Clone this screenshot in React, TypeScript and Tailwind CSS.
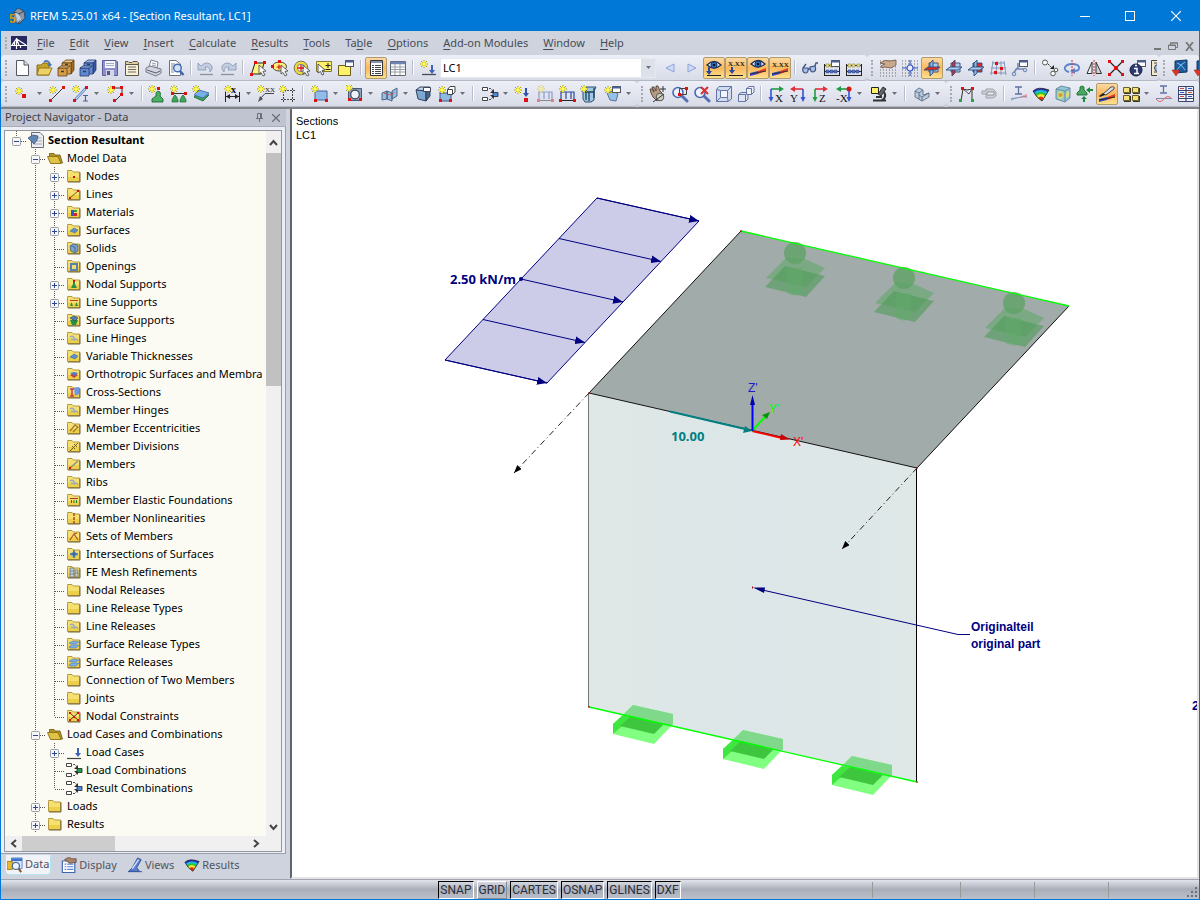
import type { ReactNode } from 'react';

import clsx from 'clsx';

interface IPoint {
  x: number;
  y: number;
}

const Star = ({ x, y }: IPoint) => (
  <g transform={`translate(${x} ${y})`}>
    <path d="M0-4V4M-4 0H4M-3-3 3 3M-3 3 3-3" stroke="#a89a12" strokeWidth="1" />
    <path d="M0-3 1-1 3 0 1 1 0 3-1 1-3 0-1-1Z" fill="#fffb6a" stroke="#f7ee3a" strokeWidth="1" />
  </g>
);

const Node = ({ x, y }: IPoint) => <rect x={x} y={y} width="3" height="3" fill="#dd1111" />;

const Cone = ({ x, y }: IPoint) => (
  <g transform={`translate(${x} ${y})`}>
    <path d="M-1-2Q0-4 1-2L3 2V4H-3V2Z" fill="#3fa65a" stroke="#1d6a30" strokeWidth="0.7" />
  </g>
);

const Eye = ({ y = 5 }: { y?: number }) => (
  <g transform={`translate(9 ${y})`}>
    <path d="M-7 0Q0-7 7 0Q0 6-7 0Z" fill="#eef4fb" stroke="#1d2c50" strokeWidth="1.3" />
    <circle r="3.1" fill="#2f6fc4" stroke="#163565" />
    <circle r="1.3" fill="#08132c" />
  </g>
);

const Dots = () => (
  <path
    d="M1 2H17M1 5H17M1 8H17M1 11H17M1 14H17M1 17H17"
    stroke="#666"
    strokeWidth="1"
    strokeDasharray="1 2"
  />
);

const Magnifier = () => (
  <>
    <path d="M11 11 16 16" stroke="#5470b4" strokeWidth="3" strokeLinecap="round" />
    <circle cx="7" cy="7.5" r="5" fill="#eaf2fd" stroke="#4a68b0" strokeWidth="1.6" />
  </>
);

const Cursor = () => <path d="M10 6 17 12 14 12.5 16 16 14 17 12 13.5 10 15Z" fill="#f5f5f5" stroke="#555" strokeWidth="0.9" />;

const Popup = () => (
  <>
    <rect x="8.5" y="1.5" width="8" height="6" fill="#fff" stroke="#555" />
    <path d="M8 2.5H17" stroke="#4a5f96" strokeWidth="2" />
  </>
);

const Ramp = () => (
  <>
    <path d="M1 17V14L9 12V15Z" fill="#2d49d2" />
    <path d="M9 15V12L17 9V12Z" fill="#e3402e" />
    <path d="M1 15 17 12" stroke="#333" />
  </>
);

interface IDrawer {
  top: string;
  side: string;
  front: string;
  edge: string;
}

const Drawer = ({ top, side, front, edge }: IDrawer) => (
  <g stroke={edge} strokeWidth="0.8">
    <path d="M5 4 9 1H17L14 4Z" fill={top} />
    <path d="M14 4 17 1V11L14 15Z" fill={side} />
    <path d="M5 4H14V15H5Z" fill={front} />
    <path d="M2 9 5 7V14L2 16Z" fill={side} />
    <path d="M1 9H10V17H1Z" fill={front} />
    <path d="M1 9 4 7H13L10 9Z" fill={top} />
    <path d="M8 5.500H11M4 12.500H7" stroke="#3a3d46" strokeWidth="1.600" />
  </g>
);

const LoadFrame = ({ faded }: { faded?: boolean }) => (
  <g opacity={faded ? 0.45 : 1}>
    <path d="M3 15V7H8V14M8 7H13V14M13 7H16V15" stroke="#2c4a9c" strokeWidth="1.2" />
    <path d="M1 15.5H17" stroke="#222" />
    <Star x={5} y={4} />
    <Node x={1} y={14} />
    <Node x={15} y={14} />
  </g>
);

interface IAxisView {
  label: string;
  across: string;
  down: string;
  flip?: boolean;
  corner?: string;
}

const AxisView = ({ label, across, down, flip, corner }: IAxisView) => (
  <>
    <g transform={flip ? 'translate(18 0) scale(-1 1)' : undefined}>
      <path d="M4 4H13" stroke={across} strokeWidth="1.600" />
      <path d="M12 1 17 4 12 7Z" fill={across} />
      <path d="M4 4V13" stroke={down} strokeWidth="1.600" />
      <path d="M1.500 12H6.500L4 17Z" fill={down} />
      {corner && <circle cx="4" cy="4" r="2.500" fill={corner} />}
    </g>
    <text x={flip ? 1 : 8} y="17" fontSize="11" fontFamily="Liberation Serif, serif" fill="#111">
      {label}
    </text>
  </>
);

const WorkPlane = ({ mode }: { mode: 1 | 2 | 3 }) => (
  <g strokeWidth="0.900">
    <path d="M6 4H15V13H6Z" fill={mode === 3 ? '#e02b22' : '#a9cdf0'} stroke="#2c4c80" />
    <path d="M7 4 10 1V14L7 17Z" fill={mode === 2 ? '#e02b22' : '#8ab8e6'} stroke="#2c4c80" />
    <path d="M1 11 5 8H17L13 11Z" fill={mode === 1 ? '#e02b22' : '#a9cdf0'} stroke="#2c4c80" />
  </g>
);

const Rainbow = () => (
  <>
    <path d="M1 6Q6 1 17 5L10 16Q4 12 1 6Z" fill="#2430b8" />
    <path d="M2 7.500Q8 3 16 7L10 16Q4 12 2 7.500Z" fill="#17bfe0" />
    <path d="M3 9Q9 5 14.500 9L10 16Q5 13 3 9Z" fill="#31c337" />
    <path d="M4.500 11Q9 7 13 11L10 16Q6 14 4.500 11Z" fill="#f7e52c" />
    <path d="M6 13Q9 10 11.500 13L10 16Z" fill="#ea2f1c" />
    <path d="M1 6Q6 1 17 5L10 16Q4 12 1 6Z" stroke="#222" strokeWidth="0.8" />
  </>
);

const Combination = ({ fill }: { fill: string }) => (
  <>
    <path d="M1.500 2.500H6.500V5.500H1.500ZM1.500 12.500H6.500V15.500H1.500Z" fill="#fff" stroke="#444" />
    <path d="M8 3.500H10L12 6M8 14.500H10L12 12" stroke="#555" strokeDasharray="2 1" />
    <path d="M13 4V8H9ZM13 14V10H9Z" fill="#333" />
    <path d="M12 7.500H17V11.500H12Z" fill={fill} stroke="#223" strokeWidth="0.800" />
  </>
);

const Prism = () => (
  <g strokeWidth="0.900">
    <path d="M2 5 6 2H16L12 6Z" fill="#bcd6ee" stroke="#27364f" />
    <path d="M2 5 12 6V16L4 14Z" fill="#7ba7d1" stroke="#27364f" />
    <path d="M12 6 16 2V11L12 16Z" fill="#41678f" stroke="#27364f" />
  </g>
);

const IBeam = ({ x, y }: IPoint) => (
  <path transform={`translate(${x} ${y})`} d="M0 0H7M3.500 0V7M0 7H7" stroke="#6272a6" strokeWidth="1.3" />
);

const Beads = () => (
  <>
    <path d="M1.500 5V17M16.500 5V17M1 16.500H17" stroke="#222" />
    <path d="M2 6.500H16M2 12.500H16" stroke="#333" />
    <path d="M3 5H6V8H3ZM7 5H10V8H7ZM12 5H15V8H12Z" fill="#f0e28a" stroke="#77703a" strokeWidth="0.500" />
    <path d="M3 11H6V14H3ZM7 11H10V14H7ZM11 11H14V14H11Z" fill="#5573c4" stroke="#2c4283" strokeWidth="0.500" />
  </>
);

const ICONS: Record<string, ReactNode> = {
  new: (
    <>
      <path d="M3.500 1.500H11L15.500 6V16.500H3.500Z" fill="#fdfdff" stroke="#55585f" />
      <path d="M11 1.500V6H15.500" fill="#d7dbe6" stroke="#55585f" />
    </>
  ),
  open: (
    <>
      <path d="M2 6H6L8 4H14V16H2Z" fill="#c8a428" stroke="#7d6412" strokeWidth="0.900" />
      <path d="M4 9H17L14 16H2Z" fill="#ecd266" stroke="#8a7018" strokeWidth="0.900" />
      <path d="M9 3Q13 0 15 5" stroke="#4976b8" strokeWidth="1.800" />
      <path d="M12 5H17L15 8Z" fill="#4976b8" />
    </>
  ),
  archive: <Drawer top="#f0c47c" side="#a36c22" front="#d99d45" edge="#59421c" />,
  blocks: <Drawer top="#9cb8ee" side="#3a58a2" front="#6188d2" edge="#24386a" />,
  save: (
    <>
      <path d="M1.500 1.500H15L16.500 3V16.500H1.500Z" fill="#8d91cb" stroke="#5a5d98" />
      <path d="M4 2H14V9H4Z" fill="#f5f6fb" />
      <path d="M5 4.500H13M5 6.500H13" stroke="#a8aac9" />
      <path d="M5 11H13V17H5Z" fill="#d4d6e6" />
      <path d="M6 12H9V16H6Z" fill="#54588c" />
    </>
  ),
  notes: (
    <>
      <path d="M2.500 5.500H15.500V16.500H2.500Z" fill="#f6efd8" stroke="#5f5745" />
      <path d="M2.500 5.500V2.500H5L6 3.500H9L10 2.500H14L15.500 4V5.500Z" fill="#ded0a4" stroke="#5f5745" />
      <path d="M5 8H13M5 10.500H13M5 13H13" stroke="#736c58" />
    </>
  ),
  print: (
    <>
      <path d="M4 8 6 1 13 3 12 9Z" fill="#fff" stroke="#7d808d" />
      <path d="M1 9 5 7 16 10V14L11 17 1 13Z" fill="#d3d6e2" stroke="#6b6e7e" strokeWidth="0.900" />
      <path d="M2 11 11 14 15 12" stroke="#5a5d6e" />
      <path d="M7 4 11 5M7 6 11 7" stroke="#9699a8" />
    </>
  ),
  preview: (
    <>
      <path d="M2.500 1.500H9L13.500 5V16.500H2.500Z" fill="#fff" stroke="#70727a" />
      <path d="M4 5H8M4 7H10M4 9H7M4 11H6M4 13H7" stroke="#85878f" />
      <circle cx="10.500" cy="9" r="3.800" fill="#cfe1f5" stroke="#456bb3" strokeWidth="1.400" />
      <path d="M13 12 16.500 16" stroke="#3f62ae" strokeWidth="2.400" />
    </>
  ),
  undo: (
    <>
      <path d="M4 7Q10 1 15 7Q16 10 13 13Q13 7 8 8L9 11H1V4Z" fill="#c3cde0" stroke="#8696b5" strokeWidth="0.800" />
      <path d="M3 15.500H16" stroke="#8b919e" strokeWidth="1.300" />
    </>
  ),
  redo: (
    <>
      <path d="M14 7Q8 1 3 7Q2 10 5 13Q5 7 10 8L9 11H17V4Z" fill="#c3cde0" stroke="#8696b5" strokeWidth="0.800" />
      <path d="M2 15.500H15" stroke="#8b919e" strokeWidth="1.300" />
    </>
  ),
  selectPlane: (
    <>
      <path d="M2.500 15 6 4H15L12 15Z" fill="#fdf37c" stroke="#222" />
      <Cursor />
      <Node x={1} y={14} />
      <Node x={5} y={2} />
      <Node x={14} y={2} />
    </>
  ),
  selectEllipse: (
    <>
      <ellipse cx="8.500" cy="7.500" rx="7" ry="4.500" fill="#fdf37c" stroke="#444" />
      <Cursor />
      <path d="M8 5.500V10.500M5.500 8H10.500" stroke="#dd1111" strokeWidth="1.200" />
      <Node x={7} y={1} />
      <Node x={0} y={6} />
    </>
  ),
  selectCircle: (
    <>
      <circle cx="8" cy="9" r="6.800" fill="#fff" stroke="#555" />
      <circle cx="8" cy="9" r="5.300" stroke="#f0d92a" strokeWidth="2.200" />
      <circle cx="8" cy="9" r="3.700" stroke="#555" strokeWidth="0.800" />
      <Cursor />
      <path d="M8 6V12M5 9H11" stroke="#dd1111" strokeWidth="1.300" />
    </>
  ),
  selectAdd: (
    <>
      <path d="M1.500 2.500H16.500V12.500H1.500Z" fill="#fdf06a" stroke="#857b2c" />
      <path d="M3 5 10 11 7 11.500 9 15 7 16 5.500 12.500 3 14Z" fill="#fff" stroke="#444" strokeWidth="0.900" />
      <path d="M13 4V9M10.500 6.500H15.500M10.500 10.500H15.500" stroke="#222" />
    </>
  ),
  selectWindow: (
    <>
      <path d="M1.500 6.500H13.500V16.500H1.500Z" fill="#fdf06a" stroke="#6a6019" />
      <Popup />
    </>
  ),
  navigator: (
    <>
      <path d="M3.500 1.500H15.500V16.500H3.500Z" fill="#fff" stroke="#333" />
      <path d="M4 3H15" stroke="#8a93ad" strokeWidth="2" />
      <path d="M8 6.500H14M8 8.500H14M8 10.500H14M8 12.500H14M8 14.500H14" stroke="#444" />
      <path d="M5 6.500H7M5 8.500H7M5 10.500H7M5 12.500H7M5 14.500H7" stroke="#444" />
    </>
  ),
  table: (
    <>
      <path d="M1.500 2.500H16.500V16.500H1.500Z" fill="#fff" stroke="#666974" />
      <path d="M2 4H16" stroke="#6d84b4" strokeWidth="2.500" />
      <path d="M2 8H16M2 10.500H16M2 13H16M6 5V16M11 5V16" stroke="#989ba4" />
    </>
  ),
  loadCase: (
    <>
      <Star x={5} y={5} />
      <path d="M13 6V12" stroke="#3e62b5" strokeWidth="2" />
      <path d="M10 11H16L13 15Z" fill="#3e62b5" />
      <path d="M3 15.500H17" stroke="#4a4c55" strokeWidth="1.300" />
    </>
  ),
  prev: <path d="M13 5V13L5 9Z" fill="#d0daf5" stroke="#8ea3dc" />,
  next: <path d="M5 5V13L13 9Z" fill="#d0daf5" stroke="#8ea3dc" />,
  showLoads: (
    <>
      <Eye y={6} />
      <path d="M4 8V14" stroke="#2548a5" strokeWidth="2" />
      <path d="M1 12H7L4 16Z" fill="#2548a5" />
      <path d="M2 16.500H16" stroke="#222" />
    </>
  ),
  loadValues: (
    <>
      <text x="1" y="7" fontSize="7" fontWeight="700" fontFamily="Liberation Serif, serif" fill="#222">
        X.XX
      </text>
      <path d="M5 8V13" stroke="#2548a5" strokeWidth="2" />
      <path d="M2 11H8L5 15Z" fill="#2548a5" />
      <path d="M2 16.500H16" stroke="#222" />
    </>
  ),
  showResults: (
    <>
      <Ramp />
      <Eye />
    </>
  ),
  resultValues: (
    <>
      <Ramp />
      <text x="1" y="8" fontSize="7" fontWeight="700" fontFamily="Liberation Serif, serif" fill="#222">
        X.XX
      </text>
    </>
  ),
  glasses: (
    <>
      <path d="M2 9Q1 13 4 14Q8 14 7 9ZM9 8Q9 13 12 13Q16 12 14 7Z" fill="#a9bfe6" stroke="#3f5482" strokeWidth="1.200" />
      <path d="M7 10H9M2 9 5 5M14 7 15 4H17" stroke="#3f5482" strokeWidth="1.300" />
    </>
  ),
  calcDialog: (
    <>
      <Beads />
      <Popup />
    </>
  ),
  calc: <Beads />,
  gridHand: (
    <>
      <Dots />
      <path d="M1 4Q6 0 11 2L17 1V6L12 9 6 8 3 9 2 7 6 5Z" fill="#cba98e" stroke="#6d5241" strokeWidth="0.800" />
    </>
  ),
  snapGrid: (
    <>
      <Dots />
      <path d="M9 1V17M1 9H17" stroke="#3a58c0" strokeWidth="1.200" />
      <circle cx="9" cy="9" r="3" fill="#e9eefb" stroke="#3a58c0" strokeWidth="1.200" />
    </>
  ),
  planeXY: <WorkPlane mode={1} />,
  planeYZ: <WorkPlane mode={2} />,
  planeXZ: <WorkPlane mode={3} />,
  guideGrid: (
    <>
      <path d="M4 2 2 16M8 2 7 16M12 2 12 16M15 2 17 16M3 4H16M2 9H17M1 14H17" stroke="#8190b5" strokeWidth="0.900" />
      <Node x={6} y={3} />
      <Node x={11} y={8} />
      <Node x={5} y={12} />
    </>
  ),
  objectSnap: (
    <>
      <path d="M6 9 2 15M6 10H14M7 4V10" stroke="#7186b4" strokeWidth="1.600" />
      <circle cx="3" cy="15" r="1.800" fill="#c6d2ea" stroke="#7186b4" />
      <circle cx="14" cy="11" r="1.800" fill="#c6d2ea" stroke="#7186b4" />
      <Popup />
    </>
  ),
  copyMove: (
    <>
      <circle cx="4" cy="3.500" r="2.500" fill="#fff" stroke="#555" />
      <circle cx="12" cy="14.500" r="2.300" fill="#fff" stroke="#555" />
      <circle cx="15" cy="11" r="1.800" fill="#fff" stroke="#555" />
      <path d="M7 5 12 10" stroke="#333" strokeDasharray="2 1" />
      <path d="M13 6V10H9Z" fill="#222" />
    </>
  ),
  rotate: (
    <>
      <path d="M6 13Q1 12 2 8Q4 5 9 5Q15 5 16 8Q17 12 11 12" stroke="#5b82c8" strokeWidth="1.800" />
      <path d="M12 9V15L7 12Z" fill="#5b82c8" />
      <path d="M9 1V17" stroke="#d03030" strokeDasharray="2 1" />
    </>
  ),
  mirror: (
    <>
      <path d="M7 3V14.500H2Z" fill="#eee" stroke="#333" />
      <path d="M11 3V14.500H16.500Z" fill="#cdd2de" stroke="#333" />
      <path d="M9 1V17" stroke="#d03030" strokeDasharray="2 1" />
    </>
  ),
  divide: (
    <>
      <path d="M2 2 16 16M16 2 2 16" stroke="#222" strokeWidth="1.200" />
      <path d="M1 1H4V4H1ZM14 1H17V4H14ZM7 7H11V11H7ZM1 14H4V17H1ZM14 14H17V17H14Z" fill="#dd1111" />
    </>
  ),
  info: (
    <>
      <Popup />
      <circle cx="7" cy="11" r="6" fill="#2c3a72" stroke="#161f48" />
      <path d="M5 9.500H8V14M5 14.500H10M6 6.500H8" stroke="#fff" strokeWidth="1.500" />
    </>
  ),
  panel: (
    <>
      <path d="M1.500 1.500H16V16.500H1.500Z" fill="#f2ead0" stroke="#444" />
      <path d="M4 4H14M4 13H14" stroke="#444" />
      <circle cx="8" cy="9" r="3.500" fill="#97b7e8" stroke="#444" />
    </>
  ),
  module: (
    <>
      <path d="M4 2 16 1V13L4 14Z" fill="#1d5b9c" stroke="#143863" />
      <path d="M6 4 10 6 14 3M6 11 10 6 14 11" stroke="#7ec4f2" />
      <path d="M1 11H9L5 17Z" fill="#e0342a" stroke="#961d17" strokeWidth="0.500" />
    </>
  ),
  node: (
    <>
      <Star x={6} y={6} />
      <rect x="9" y="9" width="4" height="4" fill="#dd1111" />
    </>
  ),
  line: (
    <>
      <path d="M3 15 15 3" stroke="#333" />
      <Star x={5} y={5} />
      <Node x={1} y={14} />
      <Node x={14} y={1} />
    </>
  ),
  member: (
    <>
      <path d="M3 15 14 3" stroke="#6d92c9" strokeWidth="2.600" />
      <path d="M3 15 14 3" stroke="#cfe2f7" />
      <Star x={4} y={4} />
      <Node x={1} y={14} />
      <Node x={13} y={1} />
      <path d="M11 10.500H16M13.500 10.500V16M11 16H16" stroke="#4c60a2" strokeWidth="1.200" />
    </>
  ),
  polyline: (
    <>
      <path d="M6 3H15V9L8 16" stroke="#333" />
      <Star x={4} y={5} />
      <Node x={5} y={1} />
      <Node x={13} y={1} />
      <Node x={13} y={8} />
      <Node x={6} y={14} />
    </>
  ),
  nodalSupport: (
    <>
      <path d="M8 8Q9 5 12 7Q13 10 12 11L15 14V17H4V14L8 11Z" fill="#4bb066" stroke="#1c6a31" strokeWidth="0.900" />
      <Star x={4} y={4} />
      <Node x={9} y={2} />
    </>
  ),
  lineSupport: (
    <>
      <path d="M4 8.500H15" stroke="#333" />
      <Star x={4} y={4} />
      <Node x={1} y={7} />
      <Node x={14} y={7} />
      <Cone x={5} y={13} />
      <Cone x={13} y={13} />
    </>
  ),
  surfaceSupport: (
    <>
      <path d="M2 12 7 8 17 10 11 16Z" fill="#3ba556" stroke="#1c6a31" strokeWidth="0.900" />
      <path d="M2 10 7 5 17 8 11 13Z" fill="#76b0ea" stroke="#3f6ba8" strokeWidth="0.900" />
      <Star x={4} y={4} />
    </>
  ),
  dimension: (
    <>
      <path d="M1.500 7V17M15.500 7V17M2 11.500H15" stroke="#222" />
      <path d="M2 11.500 6 9V14ZM15 11.500 11 9V14Z" fill="#222" />
      <Star x={4} y={4} />
      <text x="7" y="8" fontSize="10" fontWeight="700" fontFamily="Liberation Serif, serif" fill="#111">
        x
      </text>
    </>
  ),
  comment: (
    <>
      <path d="M3 14 8 8.500H17" stroke="#444" />
      <path d="M1 17 3 11 6 14Z" fill="#555" />
      <Star x={4} y={4} />
      <text x="8" y="7" fontSize="7" fontFamily="Liberation Serif, serif" fill="#222">
        XX
      </text>
    </>
  ),
  guideline: (
    <>
      <path d="M4.500 3V17M13.500 3V17M2 5.500H17M2 14.500H17" stroke="#444" strokeDasharray="2 1" />
      <Star x={4} y={4} />
    </>
  ),
  surface: (
    <>
      <path d="M4 6H16V15H4Z" fill="#93bce8" stroke="#42659a" />
      <Star x={4} y={4} />
      <Node x={3} y={14} />
      <Node x={14} y={14} />
    </>
  ),
  opening: (
    <>
      <path d="M2.500 3.500H15.500V15.500H2.500Z" fill="#8ba0bd" stroke="#4a5a75" />
      <circle cx="9" cy="9.500" r="4.300" fill="#f0f2f7" stroke="#3b465a" strokeWidth="1.200" />
      <Node x={2} y={13} />
      <Node x={13} y={13} />
      <Star x={3} y={3} />
    </>
  ),
  intersection: (
    <g strokeWidth="0.900">
      <path d="M1 8 6 6V14L1 15ZM6 6 11 8V16L6 14ZM11 6 16 3V11L11 14Z" fill="#9cbcdd" stroke="#3f5c84" />
      <path d="M3 8 9 10 14 7" stroke="#d4302a" strokeDasharray="2 1" />
    </g>
  ),
  solid: (
    <>
      <Prism />
      <path d="M9.500 2.500H16.500V6.500H9.500Z" fill="#fff" stroke="#445" />
    </>
  ),
  extrude: (
    <>
      <path d="M2 8H13V16H2Z" fill="#8fb8e2" stroke="#3d5c88" />
      <path d="M9.500 4.500H14.500V9.500H9.500ZM9.500 4.500 12 1.500H17V7L14.500 9.500" fill="#fff" stroke="#444" />
      <Star x={4} y={5} />
      <Node x={1} y={14} />
      <Node x={11} y={14} />
    </>
  ),
  combination: <Combination fill="#4d8be0" />,
  nodalLoad: (
    <>
      <Star x={4} y={5} />
      <path d="M12 3V9" stroke="#2d53ab" strokeWidth="2" />
      <path d="M9 8H15L12 12Z" fill="#2d53ab" />
      <rect x="10" y="13" width="4" height="4" fill="#dd1111" />
    </>
  ),
  lineLoad: <LoadFrame faded />,
  memberLoad: <LoadFrame />,
  surfaceLoad: (
    <>
      <path d="M3 6 6 2H16L14 6V15L11 17H5L3 14Z" fill="#9fc9e6" stroke="#2c4d6b" />
      <path d="M6 4V15M9 7V16M14 3V13M5 7H14" stroke="#223f5c" strokeWidth="1.300" />
      <Star x={4} y={4} />
    </>
  ),
  generateLoad: (
    <>
      <path d="M3 8 9 6 14 9 12 16 6 15Z" fill="#95c1e8" stroke="#54779f" />
      <Popup />
      <Star x={4} y={5} />
    </>
  ),
  pan: (
    <>
      <path d="M2 8 1 4 3 4 5 7 3 2H5L7 6 7 1H9L11 6 13 8 11 14 8 16 4 12Z" fill="#b59a86" stroke="#4c4038" strokeWidth="0.900" />
      <circle cx="11" cy="12" r="3.800" fill="#cfcfbd" stroke="#555" />
      <path d="M14 1V7M11 4H17M4 17 15 9" stroke="#333" />
    </>
  ),
  zoomWindow: (
    <>
      <Magnifier />
      <path d="M8.500 3.500H15.500V9.500H8.500Z" stroke="#444" />
      <Node x={14} y={2} />
      <Node x={7} y={8} />
    </>
  ),
  zoomOut: (
    <>
      <Magnifier />
      <path d="M8 2 15 9M15 2 8 9" stroke="#df2c2c" strokeWidth="2" />
    </>
  ),
  perspective: (
    <>
      <path d="M1.500 4.500 4 1.500H16.500V14L13 16.500H1.500Z" fill="#d3dbee" stroke="#6275a6" />
      <path d="M5.500 5.500H12.500V12.500H5.500Z" fill="#f2f5fb" stroke="#6275a6" />
      <path d="M1.500 4.500 5.500 5.500M12.500 5.500 16.500 1.500M12.500 12.500 13 16M5.500 12.500 1.500 16.500" stroke="#6275a6" />
    </>
  ),
  isometric: (
    <>
      <path d="M1.500 9.500H8.500V16.500H1.500ZM1.500 9.500 4 7.500H11V14L8.500 16.500" fill="#dfe5f3" stroke="#6275a6" />
      <path d="M9.500 3.500H14.500V9.500H9.500ZM9.500 3.500 12 1.500H17V7L14.500 9.500" fill="#eef1f9" stroke="#6275a6" />
    </>
  ),
  viewX: <AxisView label="X" across="#1f9d45" down="#3454d8" />,
  viewY: <AxisView label="Y" across="#e0303c" down="#3454d8" flip />,
  viewZ: <AxisView label="Z" across="#e0303c" down="#1f9d45" />,
  viewMinusX: <AxisView label="-X" across="#1f9d45" down="#3454d8" flip corner="#cc1a1a" />,
  workshop: (
    <>
      <path d="M1.500 2.500H8.500V8.500H1.500Z" fill="#fdf36a" stroke="#222" />
      <path d="M13 2 16 4 11 11 8 9Z" fill="#5e646c" stroke="#222" strokeWidth="0.900" />
      <path d="M14 7Q17 12 12 15M3 15.500H16M6 12H12" stroke="#333" strokeWidth="2" />
    </>
  ),
  render: (
    <g stroke="#5d7088" strokeWidth="0.900">
      <path d="M2 6 6 3 10 5V10L16 8V12L9 16 2 12Z" fill="#bccbdc" />
      <path d="M2 6 6 8V14M6 8 10 5M9 16V12L16 8M6 10 9 12" />
    </g>
  ),
  frame: (
    <>
      <path d="M3 16 5 4 9 5 14 4 14 15" stroke="#333" />
      <path d="M5 4 11 9 14 4" stroke="#333" strokeWidth="0.800" />
      <Node x={3} y={2} />
      <Node x={13} y={2} />
      <path d="M1 14H4V17H1ZM13 14H16V17H13Z" fill="#30a048" />
    </>
  ),
  scale: (
    <>
      <path d="M2 6H6V4H13L16 7V11L13 13H6V9H2Z" fill="#cfd1d6" stroke="#a0a3ab" />
      <path d="M7 7H14V10H7Z" fill="#edeef1" stroke="#8d919b" />
    </>
  ),
  memberResult: (
    <>
      <IBeam x={5} y={2} />
      <path d="M1 16V13L9 12Z" fill="#a9b6e8" />
      <path d="M17 9V13L9 12Z" fill="#e8a2a6" />
      <path d="M1 14 17 11" stroke="#8a90b0" />
    </>
  ),
  surfaceResult: <Rainbow />,
  solidResult: (
    <g strokeWidth="0.900">
      <path d="M2 4 7 1 16 3V13L11 17 2 14Z" fill="#8fc7d8" stroke="#6c8296" />
      <path d="M2 4 11 6V17M11 6 16 3" stroke="#6c8296" />
      <ellipse cx="6.500" cy="10" rx="3" ry="4" fill="#bfe37a" />
      <circle cx="6.500" cy="10" r="2" fill="#f08a4a" />
      <path d="M12 8 15 6V11L12 13Z" fill="#d6df7a" />
    </g>
  ),
  reactions: (
    <>
      <path d="M4 2Q6 0 8 2V5L11 8V10H1V8L4 5Z" fill="#46a95f" stroke="#1c6a31" strokeWidth="0.900" />
      <path d="M8 17V14M17 5H14" stroke="#20883a" strokeWidth="2" />
      <path d="M5 14H11L8 11ZM14 2V8L10 5Z" fill="#20883a" />
    </>
  ),
  section: (
    <>
      <path d="M5 9 13 2Q17 1 16 4L8 10Z" fill="#d7dde9" stroke="#333" strokeWidth="0.900" />
      <path d="M1 11 5 8 7 10 2 12Z" fill="#222" />
      <path d="M1 17V14L9 12V15Z" fill="#2d4bd2" />
      <path d="M9 15V12L17 9V12Z" fill="#e83a24" />
      <path d="M1 15 17 12" stroke="#222" />
    </>
  ),
  windows: (
    <>
      <path d="M1.500 2.500H7.500V7.500H1.500ZM10.500 2.500H16.500V7.500H10.500ZM1.500 10.500H7.500V15.500H1.500ZM10.500 10.500H16.500V15.500H10.500Z" fill="#f7e27c" stroke="#6a6026" />
      <path d="M2 8.500H8.500V3M11 8.500H17.500V3M2 16.500H8.500V11M11 16.500H17.500V11" stroke="#3a3720" />
    </>
  ),
  diagram: (
    <>
      <IBeam x={5} y={1} />
      <path d="M1 13.500H17" stroke="#7f88ac" />
      <path d="M1 14Q5 19 9 14Q13 9 17 14" stroke="#e06a6a" />
    </>
  ),
  resultTable: (
    <>
      <path d="M1.500 1.500H16.500V16.500H1.500Z" fill="#f1f4fa" stroke="#3a4570" />
      <path d="M9 1V17M1 5.500H17M1 9.500H17M1 13.500H17" stroke="#3a4570" strokeWidth="1.200" />
      <path d="M3 3.500H7M3 11.500H7M11 7.500H15" stroke="#d3473d" />
      <path d="M11 3.500H15M3 7.500H7M11 11.500H15" stroke="#3154c4" />
    </>
  )
};

interface ITool {
  id: string;
  on?: boolean;
  menu?: boolean;
}

const SEP = { id: 'sep' };

const FILE_TOOLS: ITool[] = [
  ...['new', 'open', 'archive', 'blocks', 'save', 'notes', 'print', 'preview'].map((id) => ({ id })),
  SEP,
  { id: 'undo' },
  { id: 'redo' },
  SEP,
  ...['selectPlane', 'selectEllipse', 'selectCircle', 'selectAdd', 'selectWindow'].map((id) => ({ id })),
  SEP,
  { id: 'navigator', on: true },
  { id: 'table' },
  SEP,
  { id: 'loadCase' }
];

const RESULT_TOOLS: ITool[] = [
  { id: 'prev' },
  { id: 'next' },
  { id: 'showLoads', on: true },
  { id: 'loadValues', on: true },
  { id: 'showResults', on: true },
  { id: 'resultValues', on: true },
  SEP,
  { id: 'glasses' },
  { id: 'calcDialog' },
  { id: 'calc' }
];

const PLANE_TOOLS: ITool[] = [
  { id: 'gridHand' },
  { id: 'snapGrid' },
  { id: 'planeXY', on: true },
  { id: 'planeYZ' },
  { id: 'planeXZ' },
  { id: 'guideGrid' },
  { id: 'objectSnap' },
  SEP,
  ...['copyMove', 'rotate', 'mirror', 'divide', 'info'].map((id) => ({ id }))
];

const INSERT_TOOLS: ITool[] = [
  { id: 'node', menu: true },
  { id: 'line' },
  { id: 'member', menu: true },
  { id: 'polyline', menu: true },
  SEP,
  { id: 'nodalSupport' },
  { id: 'lineSupport' },
  { id: 'surfaceSupport' },
  SEP,
  { id: 'dimension', menu: true },
  { id: 'comment' },
  { id: 'guideline' },
  SEP,
  { id: 'surface', menu: true },
  { id: 'opening', menu: true },
  { id: 'intersection', menu: true },
  { id: 'solid' },
  { id: 'extrude', menu: true },
  SEP,
  { id: 'combination', menu: true },
  { id: 'nodalLoad' },
  { id: 'lineLoad' },
  { id: 'memberLoad' },
  { id: 'surfaceLoad' },
  { id: 'generateLoad', menu: true }
];

const VIEW_TOOLS: ITool[] = [
  ...['pan', 'zoomWindow', 'zoomOut', 'perspective', 'isometric'].map((id) => ({ id })),
  SEP,
  { id: 'viewX' },
  { id: 'viewY' },
  { id: 'viewZ' },
  { id: 'viewMinusX', menu: true },
  { id: 'workshop', menu: true },
  SEP,
  { id: 'render', menu: true }
];

const DISPLAY_TOOLS: ITool[] = [
  { id: 'frame' },
  { id: 'scale' },
  SEP,
  { id: 'memberResult' },
  { id: 'surfaceResult' },
  { id: 'solidResult' },
  { id: 'reactions' },
  { id: 'section', on: true },
  { id: 'windows', menu: true },
  { id: 'diagram' },
  { id: 'resultTable' }
];

const Icon = ({ id }: { id: string }) => (
  <svg width="18" height="18" viewBox="0 0 18 18" fill="none" className="shrink-0" aria-hidden="true">
    {ICONS[id]}
  </svg>
);

const Tools = ({ items }: { items: ITool[] }) => (
  <>
    {items.map(({ id, on, menu }, i) => {
      if (id === 'sep') {
        return (
          <span key={i} className="flex w-2 shrink-0 justify-center">
            <span className="h-[15px] w-[2px] border-r border-white bg-[#b9bdc9]" />
          </span>
        );
      }
      return (
        <span key={i} className="flex shrink-0 items-center">
          <button
            type="button"
            aria-label={id}
            className={clsx(
              'flex h-[22px] w-[22px] items-center justify-center',
              on && 'rounded-xs border border-[#b19a6c] bg-linear-to-b from-[#fcd9a2] via-[#fbb75c] to-[#fde08d]',
              menu && id !== 'node' && 'pl-1'
            )}
          >
            <Icon id={id} />
          </button>
          {menu && (
            <button type="button" aria-label={`${id} menu`} className="flex h-[22px] w-[13px] items-center justify-center">
              <svg width="5" height="3" viewBox="0 0 5 3" aria-hidden="true">
                <path d="M0 0H5L2.500 3Z" fill="#6d7079" />
              </svg>
            </button>
          )}
        </span>
      );
    })}
  </>
);

const Bar = ({ children, grow }: { children: ReactNode; grow?: boolean }) => (
  <div
    className={clsx(
      'flex h-[26px] items-center rounded-sm border-b border-[#b4b8c5] bg-linear-to-b from-[#edeff7] to-[#d8dce7] pr-[2px]',
      grow ? 'min-w-0 flex-1 overflow-hidden' : 'shrink-0'
    )}
  >
    <span className="flex w-[10px] shrink-0 justify-center">
      <span className="h-4 border-l-2 border-dotted border-[#a5a9b6]" />
    </span>
    {children}
  </div>
);

const MENU = ['File', 'Edit', 'View', 'Insert', 'Calculate', 'Results', 'Tools', 'Table', 'Options', 'Add-on Modules', 'Window', 'Help'];

const TitleBar = () => (
  <header className="flex h-[30px] shrink-0 items-center bg-[#0078d7] text-white">
    <svg width="18" height="18" viewBox="0 0 18 18" fill="none" className="ml-[7px]" aria-hidden="true">
      <path d="M6 5 10 1 16 4 17 11 11 17 5 14Z" fill="#8798ad" stroke="#3c4a5c" />
      <path d="M6 5 11 7 16 4M11 7 11 17" stroke="#35424f" />
      <path d="M7 6Q11 5 13 12L10 15Z" fill="#c3cedb" />
      <text x="1" y="16" fontSize="12" fontWeight="700" fontFamily="Liberation Sans, sans-serif" fill="#f3b31c" stroke="#5c4204" strokeWidth="0.300">
        5
      </text>
    </svg>
    <h1 className="ml-1 flex-1 text-[11px]">RFEM 5.25.01 x64 - [Section Resultant, LC1]</h1>
    <button type="button" aria-label="Minimize" className="flex h-full w-[45px] items-center justify-center">
      <span className="h-px w-[10px] bg-white" />
    </button>
    <button type="button" aria-label="Maximize" className="flex h-full w-[45px] items-center justify-center">
      <span className="h-[10px] w-[10px] border border-white" />
    </button>
    <button type="button" aria-label="Close" className="flex h-full w-[47px] items-center justify-center">
      <svg width="10" height="10" viewBox="0 0 10 10" aria-hidden="true">
        <path d="M0 0 10 10M10 0 0 10" stroke="#fff" strokeWidth="1.200" />
      </svg>
    </button>
  </header>
);

const MenuBar = () => (
  <nav className="flex h-6 shrink-0 items-center bg-[#cfd3dd] text-[11px] text-[#484b57]">
    <span className="ml-1 h-3 border-l-2 border-dotted border-[#a5a9b6]" />
    <svg width="16" height="14" viewBox="0 0 16 14" fill="none" className="mr-[10px] ml-1" aria-hidden="true">
      <rect width="16" height="14" fill="#27285f" />
      <path d="M0 9.500H16M5.500 2V13M1 9 5.500 3 8 9M5.500 3 15 9M9.500 9V12M3.500 6V9" stroke="#fff" strokeWidth="1.200" />
    </svg>
    <div className="flex flex-1 gap-[15px]">
      {MENU.map((label) => {
        const at = label === 'Table' ? 2 : 0;
        return (
          <button key={label} type="button">
            {label.slice(0, at)}
            <span className="underline underline-offset-2">{label[at]}</span>
            {label.slice(at + 1)}
          </button>
        );
      })}
    </div>
    <div className="mr-1 flex items-center gap-1 self-end pb-[3px]">
      <button type="button" aria-label="Minimize document" className="flex h-3 w-3 items-end justify-center pb-[2px]">
        <span className="h-[2px] w-[7px] bg-[#777]" />
      </button>
      <button type="button" aria-label="Restore document" className="flex h-3 w-3 items-center justify-center">
        <svg width="10" height="8" viewBox="0 0 10 8" fill="none" aria-hidden="true">
          <path d="M2.500 3V1H9.500V5.500H8M.5 3H7.500V7.500H.5Z" stroke="#777" />
          <path d="M2 1H10M0 3.500H8" stroke="#777" />
        </svg>
      </button>
      <button type="button" aria-label="Close document" className="flex h-3 w-3 items-center justify-center">
        <svg width="9" height="9" viewBox="0 0 9 9" aria-hidden="true">
          <path d="M1 0 8 9M8 0 1 9" stroke="#777" strokeWidth="1.800" />
        </svg>
      </button>
    </div>
  </nav>
);

const Toolbars = () => (
  <div className="shrink-0 border-b-2 border-[#808287] bg-[#cfd3dd]">
    <div className="flex overflow-hidden">
      <Bar>
        <Tools items={FILE_TOOLS} />
        <div className="mr-[3px] ml-px flex h-5 w-[216px] border border-[#e6e9f0] bg-white">
          <label htmlFor="load-case" className="sr-only">
            Load case
          </label>
          <select id="load-case" className="min-w-0 flex-1 appearance-none bg-white px-[2px] text-[11px] leading-[18px] text-black outline-none">
            <option>LC1</option>
          </select>
          <span className="flex w-[14px] items-center justify-center bg-[#dde1ea]">
            <svg width="5" height="3" viewBox="0 0 5 3" aria-hidden="true">
              <path d="M0 0H5L2.500 3Z" fill="#6d7079" />
            </svg>
          </span>
        </div>
        <Tools items={RESULT_TOOLS} />
      </Bar>
      <Bar>
        <Tools items={PLANE_TOOLS} />
        <button type="button" aria-label="panel" className="w-2 overflow-hidden pl-px">
          <Icon id="panel" />
        </button>
      </Bar>
      <Bar grow>
        <Tools items={[{ id: 'module' }, { id: 'module' }]} />
      </Bar>
    </div>
    <div className="flex overflow-hidden">
      <Bar>
        <Tools items={INSERT_TOOLS} />
      </Bar>
      <Bar>
        <Tools items={VIEW_TOOLS} />
      </Bar>
      <Bar grow>
        <Tools items={DISPLAY_TOOLS} />
      </Bar>
    </div>
  </div>
);

// Small drawings placed on the closed folder, in its 16x16 box
const BADGES: Record<string, ReactNode> = {
  node: <rect x="7" y="8" width="2" height="2" fill="#d01010" />,
  line: (
    <>
      <path d="M4 12 12 5" stroke="#7a5a2a" />
      <path d="M3 11H5V13H3ZM11 4H13V6H11Z" fill="#d01010" />
    </>
  ),
  material: (
    <>
      <path d="M5 6H8V12H5Z" fill="#3557c8" />
      <path d="M8 9H11V12H8Z" fill="#d8222a" />
      <path d="M8 6H11V8H8Z" fill="#2fa44a" />
    </>
  ),
  surface: <path d="M4 9 8 6 12 8 9 11Z" fill="#5b8fd0" stroke="#39608f" strokeWidth="0.500" />,
  solid: (
    <>
      <path d="M4 6 7 4 12 5V11L9 13 5 11Z" fill="#7ba4d4" stroke="#3d5a82" strokeWidth="0.800" />
      <path d="M5 6 9 7V12" stroke="#3d5a82" strokeWidth="0.800" />
    </>
  ),
  opening: <path d="M5 6H11V12H5Z" fill="#f3dc72" stroke="#5b7fae" strokeWidth="2" />,
  support: (
    <>
      <path d="M7 6H9V8L11 12H5L7 8Z" fill="#2b8f45" />
      <rect x="7" y="4" width="2" height="2" fill="#d01010" />
    </>
  ),
  lineSupport: (
    <>
      <path d="M4 6.500H12" stroke="#c23a2a" />
      <path d="M4 12 5.500 8 7 12ZM9 12 10.500 8 12 12Z" fill="#2b8f45" />
    </>
  ),
  surfaceSupport: (
    <>
      <path d="M4 8 12 8 10 13H6Z" fill="#2b8f45" />
      <path d="M4 6 8 4 12 6 9 9Z" fill="#4f7fbd" stroke="#1d4250" strokeWidth="0.600" />
    </>
  ),
  hinge: <path d="M4 7Q7 5 9 9L12 10M5 9 9 10" stroke="#9aa9bb" strokeWidth="1.500" />,
  ortho: (
    <>
      <path d="M4 9 8 7 12 9 8 12Z" fill="#d0393f" />
      <path d="M4 7 8 6 12 7 9 10Z" fill="#4b7ec7" />
    </>
  ),
  cross: (
    <>
      <path d="M8 4 13 3V10L9 12Z" fill="#6f97e6" />
      <path d="M4 5H8M6 5V12M4 12H8" stroke="#c43b55" strokeWidth="1.500" />
    </>
  ),
  eccentric: <path d="M4 11 9 5 12 7 7 12" stroke="#a3742a" strokeWidth="1.200" />,
  division: <path d="M4 13 12 5M6 8 9 11M8 6 11 9" stroke="#6a5a2d" />,
  member: (
    <>
      <path d="M4 12 12 5" stroke="#8a8f94" strokeWidth="1.500" />
      <path d="M3 11H5V13H3Z" fill="#d01010" />
    </>
  ),
  foundation: (
    <>
      <path d="M4 6.500H12" stroke="#a33" />
      <path d="M5.500 8V11M8 8V11M10.500 8V11" stroke="#1c7a34" />
    </>
  ),
  nonlinear: <path d="M8 3V14" stroke="#b04a30" strokeWidth="1.500" strokeDasharray="3 1" />,
  set: <path d="M4 12 8 6 12 12M8 6 11 5" stroke="#b0502e" strokeWidth="1.200" />,
  intersect: (
    <>
      <path d="M4 8 8 5 12 8 8 12Z" fill="#6ba3dd" />
      <path d="M8 4V12M4 8H12" stroke="#2c4c78" />
    </>
  ),
  mesh: (
    <>
      <path d="M4 4H8V13H4ZM9 6H12V13H9Z" fill="#c3ceda" stroke="#5a6880" strokeWidth="0.700" />
      <path d="M4 7H8M4 10H8M9 9H12" stroke="#5a6880" strokeWidth="0.700" />
    </>
  ),
  release: <path d="M3 7 7 5 13 6 10 8H4ZM3 11 6 9H13L10 12H4Z" fill="#7db0e6" stroke="#4a79b4" strokeWidth="0.600" />,
  constraint: (
    <>
      <path d="M4 5 12 12M12 5 4 12" stroke="#5a3a1a" />
      <path d="M3 4H5V6H3ZM11 4H13V6H11ZM3 11H5V13H3ZM11 11H13V13H11ZM7 8H9V10H7Z" fill="#d01010" />
    </>
  )
};

const TreeIcon = ({ id }: { id: string }) => {
  if (id === 'load') {
    return (
      <svg width="18" height="16" viewBox="0 0 18 16" fill="none" aria-hidden="true">
        <path d="M13 4V10" stroke="#3e62b5" strokeWidth="2" />
        <path d="M10 9H16L13 13Z" fill="#3e62b5" />
        <path d="M2 14.500H16" stroke="#444" strokeWidth="1.200" />
      </svg>
    );
  }
  if (id === 'lc' || id === 'rc') {
    return (
      <svg width="18" height="16" viewBox="0 1 18 16" fill="none" aria-hidden="true">
        <Combination fill={id === 'lc' ? '#12a83c' : '#4d8be0'} />
      </svg>
    );
  }
  if (id === 'model') {
    return (
      <svg width="16" height="16" viewBox="0 0 16 16" fill="none" aria-hidden="true">
        <path d="M3.500.5H12L15.500 4V15.500H3.500Z" fill="#eceef2" stroke="#6a6e78" />
        <path d="M5 6H13M5 9H14M5 12H14" stroke="#a3a6af" />
        <path d="M0 6 5 3 10 4 9 8 6 12 4 10Z" fill="#6286b4" stroke="#3d5677" strokeWidth="0.800" />
      </svg>
    );
  }
  if (id === 'open') {
    return (
      <svg width="16" height="16" viewBox="0 0 16 16" fill="none" aria-hidden="true">
        <path d="M2.500 6V3.500H7L8 5H13L15.500 13H4Z" fill="#b39423" stroke="#7b6519" strokeWidth="0.900" />
        <path d="M.5 6.500H11L14 13.500H3.500Z" fill="#e0c244" stroke="#8a7018" strokeWidth="0.900" />
      </svg>
    );
  }
  return (
    <svg width="16" height="16" viewBox="0 0 16 16" fill="none" aria-hidden="true">
      <path d="M1.500 3.500V2.500H6L7.500 4H13.500V13.500H1.500Z" fill="#f5e070" stroke="#b39a40" />
      <path d="M2 9H13V13H2Z" fill="#ecd04a" />
      <path d="M14 4.500V14H2" stroke="#75653a" />
      {BADGES[id]}
    </svg>
  );
};

interface ITreeRow {
  depth: number;
  label: string;
  icon: string;
  box?: '+' | '-';
  last?: boolean;
}

const TREE: ITreeRow[] = [
  { depth: 0, label: 'Section Resultant', icon: 'model', box: '-', last: true },
  { depth: 1, label: 'Model Data', icon: 'open', box: '-' },
  { depth: 2, label: 'Nodes', icon: 'node', box: '+' },
  { depth: 2, label: 'Lines', icon: 'line', box: '+' },
  { depth: 2, label: 'Materials', icon: 'material', box: '+' },
  { depth: 2, label: 'Surfaces', icon: 'surface', box: '+' },
  { depth: 2, label: 'Solids', icon: 'solid' },
  { depth: 2, label: 'Openings', icon: 'opening' },
  { depth: 2, label: 'Nodal Supports', icon: 'support', box: '+' },
  { depth: 2, label: 'Line Supports', icon: 'lineSupport', box: '+' },
  { depth: 2, label: 'Surface Supports', icon: 'surfaceSupport' },
  { depth: 2, label: 'Line Hinges', icon: 'hinge' },
  { depth: 2, label: 'Variable Thicknesses', icon: 'surface' },
  { depth: 2, label: 'Orthotropic Surfaces and Membra', icon: 'ortho' },
  { depth: 2, label: 'Cross-Sections', icon: 'cross' },
  { depth: 2, label: 'Member Hinges', icon: 'hinge' },
  { depth: 2, label: 'Member Eccentricities', icon: 'eccentric' },
  { depth: 2, label: 'Member Divisions', icon: 'division' },
  { depth: 2, label: 'Members', icon: 'member' },
  { depth: 2, label: 'Ribs', icon: 'hinge' },
  { depth: 2, label: 'Member Elastic Foundations', icon: 'foundation' },
  { depth: 2, label: 'Member Nonlinearities', icon: 'nonlinear' },
  { depth: 2, label: 'Sets of Members', icon: 'set' },
  { depth: 2, label: 'Intersections of Surfaces', icon: 'intersect' },
  { depth: 2, label: 'FE Mesh Refinements', icon: 'mesh' },
  { depth: 2, label: 'Nodal Releases', icon: 'folder' },
  { depth: 2, label: 'Line Release Types', icon: 'folder' },
  { depth: 2, label: 'Line Releases', icon: 'hinge' },
  { depth: 2, label: 'Surface Release Types', icon: 'release' },
  { depth: 2, label: 'Surface Releases', icon: 'release' },
  { depth: 2, label: 'Connection of Two Members', icon: 'folder' },
  { depth: 2, label: 'Joints', icon: 'folder' },
  { depth: 2, label: 'Nodal Constraints', icon: 'constraint', last: true },
  { depth: 1, label: 'Load Cases and Combinations', icon: 'open', box: '-' },
  { depth: 2, label: 'Load Cases', icon: 'load', box: '+' },
  { depth: 2, label: 'Load Combinations', icon: 'lc' },
  { depth: 2, label: 'Result Combinations', icon: 'rc', last: true },
  { depth: 1, label: 'Loads', icon: 'folder', box: '+' },
  { depth: 1, label: 'Results', icon: 'folder', box: '+' }
];

const Branch = ({ row }: { row: ITreeRow }) => (
  <svg width="19" height="18" viewBox="0 0 19 18" fill="none" aria-hidden="true">
    <path d={row.last ? 'M9.500 0V10' : 'M9.500 0V18'} stroke="#555" strokeDasharray="1 1" />
    <path d="M10 10.500H19" stroke="#555" strokeDasharray="1 1" />
    {row.box && (
      <>
        <rect x="5.500" y="6.500" width="8" height="8" rx="1" fill="#f6f6f6" stroke="#9a9da5" />
        <path d={row.box === '+' ? 'M7 10.500H12M9.500 8V13' : 'M7 10.500H12'} stroke="#2a4696" />
      </>
    )}
  </svg>
);

const TreeRow = ({ row }: { row: ITreeRow }) => (
  <li role="treeitem" className="flex h-[18px] items-center whitespace-nowrap">
    {row.depth > 0 && <span className="w-[19px] shrink-0" />}
    {row.depth > 1 && (
      <svg width="19" height="18" viewBox="0 0 19 18" className="shrink-0" aria-hidden="true">
        <path d="M9.500 0V18" stroke="#555" strokeDasharray="1 1" />
      </svg>
    )}
    {row.box ? (
      <button type="button" aria-label={`Toggle ${row.label}`} className="shrink-0">
        <Branch row={row} />
      </button>
    ) : (
      <span className="shrink-0">
        <Branch row={row} />
      </span>
    )}
    <span className="mr-[2px] flex w-5 shrink-0 justify-center">
      <TreeIcon id={row.icon} />
    </span>
    <span className={clsx(row.depth === 0 && 'font-bold')}>{row.label}</span>
  </li>
);

const Chevron = ({ d }: { d: string }) => (
  <svg width="9" height="9" viewBox="0 0 9 9" fill="none" aria-hidden="true">
    <path d={d} stroke="#444" strokeWidth="2" />
  </svg>
);

const TabIcon = ({ id }: { id: string }) => (
  <svg width="16" height="16" viewBox="0 0 18 18" fill="none" aria-hidden="true">
    {id === 'Data' && (
      <>
        <path d="M5 1H17V13H5Z" fill="#d6e6fa" stroke="#5b88d0" />
        <path d="M5 3H17" stroke="#3f70c8" strokeWidth="3" />
        <path d="M0 5H6V14H0Z" fill="#e9bb29" stroke="#a07c1a" />
        <circle cx="10" cy="10" r="4" fill="#eef5ff" stroke="#4d6c9f" strokeWidth="1.500" />
        <path d="M13 13 16 17" stroke="#86522a" strokeWidth="2.200" />
      </>
    )}
    {id === 'Display' && (
      <>
        <path d="M1.500 4.500H15.500V17.500H1.500Z" fill="#fff" stroke="#3f66b0" strokeWidth="1.300" />
        <path d="M4 8H6M7 8H14M4 11H6M7 11H14M4 14H6M7 14H14" stroke="#5a84d0" strokeWidth="1.300" />
        <path d="M4 3Q9-1 12 2H17V6L10 7Z" fill="#aa8467" stroke="#5c483a" strokeWidth="0.900" />
      </>
    )}
    {id === 'Views' && (
      <>
        <path d="M1 16.500H17M12 1 16 3 11 12 14 16H2L6 12Z" fill="#5b80d2" stroke="#30509c" />
        <path d="M6 13 13 3" stroke="#d8e3fa" strokeWidth="1.500" />
      </>
    )}
    {id === 'Results' && <Rainbow />}
  </svg>
);

const Navigator = () => (
  <aside className="flex w-[285px] shrink-0 flex-col">
    <div className="flex h-[18px] shrink-0 items-center border-b border-[#a9adbb] bg-[#c0c4d1] pr-[6px] pl-1 text-[11px] text-[#3e4049]">
      <h2 className="flex-1">Project Navigator - Data</h2>
      <button type="button" aria-label="Pin" className="mr-2">
        <svg width="9" height="9" viewBox="0 0 9 9" fill="none" aria-hidden="true">
          <path d="M2.500 5V.5H6.500V5M5.500 1V5M1 5.500H8M4.500 6V9" stroke="#6d6f78" />
        </svg>
      </button>
      <button type="button" aria-label="Close navigator">
        <svg width="8" height="8" viewBox="0 0 8 8" aria-hidden="true">
          <path d="M0 0 8 8M8 0 0 8" stroke="#6d6f78" strokeWidth="1.300" />
        </svg>
      </button>
    </div>
    <div className="flex min-h-0 flex-1 flex-col border-r border-b border-[#9a9ea9] bg-[#eceef5] px-[3px] pt-[3px] pb-px">
      <div className="flex min-h-0 flex-1 flex-col border border-[#9296a1] bg-[#f0f0f0]">
        <div className="flex min-h-0 flex-1">
          <ul role="tree" className="min-w-0 flex-1 overflow-hidden bg-[#fbfbf3] pl-[2px] text-[11px] text-black">
            {TREE.map((row) => (
              <TreeRow key={row.label + row.depth} row={row} />
            ))}
          </ul>
          <div className="flex w-[15px] shrink-0 flex-col">
            <button type="button" aria-label="Scroll up" className="flex h-[22px] items-center justify-center">
              <Chevron d="M1 7 4.500 3 8 7" />
            </button>
            <div className="h-[33%] bg-[#c1c1c1]" />
            <div className="flex-1" />
            <button type="button" aria-label="Scroll down" className="flex h-[18px] items-center justify-center">
              <Chevron d="M1 2 4.500 6 8 2" />
            </button>
          </div>
        </div>
        <div className="mr-4 flex h-[15px] shrink-0 items-center">
          <button type="button" aria-label="Scroll left" className="flex h-full w-[17px] items-center justify-center">
            <Chevron d="M7 1 3 4.500 7 8" />
          </button>
          <div className="h-full w-[93px] bg-[#cdcdcd]" />
          <div className="flex-1" />
          <button type="button" aria-label="Scroll right" className="flex h-full w-[18px] items-center justify-center">
            <Chevron d="M2 1 6 4.500 2 8" />
          </button>
        </div>
      </div>
    </div>
    <div role="tablist" className="flex h-[25px] shrink-0 items-start gap-[10px] pt-px pl-1 text-[11px] text-[#51545f]">
      {['Data', 'Display', 'Views', 'Results'].map((tab) => (
        <button
          key={tab}
          type="button"
          role="tab"
          aria-selected={tab === 'Data'}
          className={clsx(
            'flex h-5 items-center gap-[2px]',
            tab === 'Data' && 'rounded-b-sm border border-t-0 border-[#b7e3ea] bg-[#f1f3f8] px-px'
          )}
        >
          <TabIcon id={tab} />
          {tab}
        </button>
      ))}
    </div>
  </aside>
);

const LOAD_STEPS = [0, 1, 2, 3, 4];

const Viewport = () => (
  <main className="ml-1 min-w-0 flex-1 overflow-hidden border-r-2 border-b-2 border-l-2 border-r-[#e3e3e3] border-b-[#e3e3e3] border-l-[#62646a] bg-white">
    <svg viewBox="292 109 905 768" preserveAspectRatio="xMinYMin meet" fill="none" className="h-full w-full" role="img" aria-label="Model view">
      <defs>
        <marker id="load-head" viewBox="0 0 10 8" refX="10" refY="4" markerWidth="10" markerHeight="8" markerUnits="userSpaceOnUse" orient="auto">
          <path d="M0 0 10 4 0 8Z" fill="#000080" />
        </marker>
        <marker id="dir-head" viewBox="0 0 8 6" refX="8" refY="3" markerWidth="8" markerHeight="6" markerUnits="userSpaceOnUse" orient="auto">
          <path d="M0 0 8 3 0 6Z" fill="#000" />
        </marker>
        <linearGradient id="wall" x1="0" x2="1">
          <stop offset="0" stopColor="#dfe8e6" />
          <stop offset="0.5" stopColor="#dde6e8" />
          <stop offset="1" stopColor="#dfe8e7" />
        </linearGradient>
        <g id="roof-support">
          <path d="M766 278 787 257 805 259 825 268 806 287Z" fill="#62a96b" fillOpacity="0.6" />
          <path d="M785 266 825 276 806 297 765 287Z" fill="#4f9d59" fillOpacity="0.6" />
          <path d="M787 268V293Q795 298 802 293V268Z" fill="#62a96b" fillOpacity="0.5" />
          <circle cx="795" cy="253" r="11" fill="#5fa366" fillOpacity="0.8" />
        </g>
        <g id="base-support">
          <path d="M633 705 673 714V724L654 744 613 734V724Z" fill="#80ff80" />
          <path d="M633 705 673 714V724L671 726 623 715Z" fill="#80d98b" />
          <path d="M613 724 623 715 632 717 621 727 613 734Z" fill="#3fe63f" />
          <path d="M631 716 664 724 654 734 620 726Z" fill="#3fc63f" />
        </g>
      </defs>

      <g fontFamily="Liberation Sans, sans-serif" fontSize="11" fill="#000">
        <text x="296" y="125">Sections</text>
        <text x="296" y="139">LC1</text>
      </g>

      <path d="M597 198 699 221 547 383 445 360Z" fill="#cccce8" stroke="#000080" />
      {LOAD_STEPS.map((i) => (
        <line
          key={i}
          x1={597 - 38 * i}
          y1={198 + 40.5 * i}
          x2={699 - 38 * i}
          y2={221 + 40.5 * i}
          stroke="#000080"
          markerEnd="url(#load-head)"
        />
      ))}
      <circle cx="521" cy="279" r="2" fill="#000080" />

      <path d="M589 393 917 468V782L589 707Z" fill="url(#wall)" />
      <path d="M741 231 1069 306 917 468 589 393Z" fill="#a1aba9" />
      <use href="#roof-support" />
      <use href="#roof-support" x="109" y="25" />
      <use href="#roof-support" x="219" y="50" />
      <path d="M741 231 589 393 917 468 1069 306" stroke="#111" />
      <path d="M588.500 393V707" stroke="#777" />
      <path d="M916.500 468V782" stroke="#000" />
      <path d="M741 231 1069 306" stroke="#00ff00" strokeWidth="1.300" />

      <use href="#base-support" />
      <use href="#base-support" x="110" y="25" />
      <use href="#base-support" x="219" y="51" />
      <path d="M589 707 917 782" stroke="#00ff00" strokeWidth="1.300" />

      <path d="M589 393 514 473" stroke="#222" strokeDasharray="6 3 1 3" markerEnd="url(#dir-head)" />
      <path d="M917 468 842 549" stroke="#222" strokeDasharray="6 3 1 3" markerEnd="url(#dir-head)" />

      <path d="M670 411.500 745 429" stroke="#008080" strokeWidth="2" />
      <path d="M752 431 743 433 745 426Z" fill="#008080" />
      <path d="M752 431 782 438" stroke="#f00" strokeWidth="2" />
      <path d="M790 439.500 780 440 781 434Z" fill="#c00" />
      <path d="M752 431 765 417" stroke="#0f0" strokeWidth="2" />
      <path d="M770 412 767 419 762 415Z" fill="#0a930a" />
      <path d="M752.500 431V404" stroke="#00f" strokeWidth="2" />
      <path d="M752.500 395 755 405H750Z" fill="#0000b0" />
      <g fontFamily="Liberation Sans, sans-serif" fontSize="12">
        <text x="748" y="392" fill="#1a1ad0">Z&apos;</text>
        <text x="769" y="413" fill="#0f0">Y&apos;</text>
        <text x="793" y="446" fill="#f00">X&apos;</text>
      </g>

      <path d="M758 589 958 634.500H970" stroke="#000080" />
      <path d="M753 587.500 765 587.500 764 593Z" fill="#000080" />
      <path d="M740.500 231h1M588.500 393h1M916.500 468h1M588.500 707h1M752 587.500h1M916.500 782h1" stroke="#a00" strokeWidth="2" />

      <g fontWeight="700" fontFamily="Noto Sans, sans-serif">
        <text x="516" y="284" fontSize="13" textAnchor="end" fill="#000080">
          2.50 kN/m
        </text>
        <text x="671" y="441" fontSize="13" fill="#008080">
          10.00
        </text>
      </g>
      <g fontWeight="700" fontFamily="Liberation Sans, sans-serif" fontSize="12" fill="#000080">
        <text x="971" y="631">Originalteil</text>
        <text x="971" y="648">original part</text>
        <text x="1192" y="710" fontSize="13">2</text>
      </g>
    </svg>
  </main>
);

const MODES = ['SNAP', 'GRID', 'CARTES', 'OSNAP', 'GLINES', 'DXF'];

const StatusBar = () => (
  <footer className="flex h-5 shrink-0 items-center border-t border-[#a0a4b2] bg-linear-to-b from-[#e2e4ec] via-[#a9aeb9] to-[#bbc0ca]">
    <div className="flex flex-1 justify-center gap-[3px] pl-[246px] text-[12px] text-[#2b2e39]">
      {MODES.map((mode) => (
        <button
          key={mode}
          type="button"
          className={clsx(
            "h-[18px] border px-px font-['Roboto','Liberation_Sans',sans-serif] leading-4",
            mode === 'GRID' ? 'border-t-white border-r-[#8b8e97] border-b-[#8b8e97] border-l-white' : 'border-t-black border-r-white border-b-white border-l-black'
          )}
        >
          {mode}
        </button>
      ))}
    </div>
    <div className="flex h-full items-center">
      <span className="h-4 w-[88px] border-l border-[#999]" />
      <span className="h-4 w-[74px] border-l border-[#999]" />
      <span className="h-4 w-[74px] border-l border-[#999]" />
      <span className="h-4 w-[79px] border-l border-[#999]" />
      <svg width="12" height="12" viewBox="0 0 12 12" className="self-end" aria-hidden="true">
        <path d="M8 0h2v2h-2zM4 4h2v2h-2zM8 4h2v2h-2zM0 8h2v2h-2zM4 8h2v2h-2zM8 8h2v2h-2z" fill="#6b6f7b" />
      </svg>
    </div>
  </footer>
);

const App = () => (
  <div className="flex h-screen flex-col overflow-hidden border border-[#0078d7] bg-[#cfd3dd] font-['Noto_Sans','Open_Sans',sans-serif]">
    <TitleBar />
    <MenuBar />
    <Toolbars />
    <div className="flex min-h-0 flex-1">
      <Navigator />
      <Viewport />
    </div>
    <StatusBar />
  </div>
);

export default App;
